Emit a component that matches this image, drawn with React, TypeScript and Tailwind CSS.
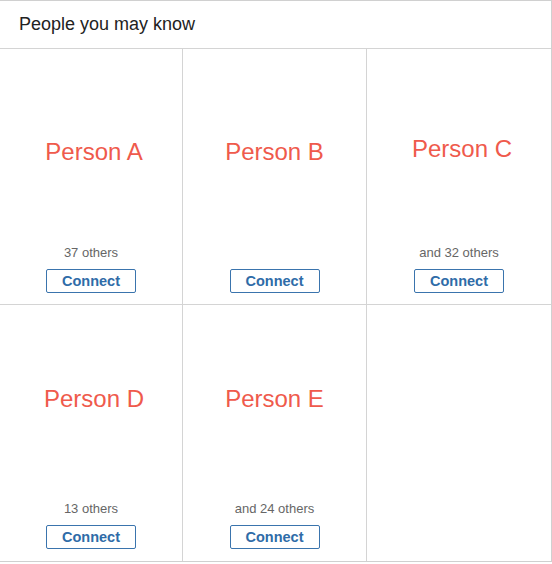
import React from 'react';

interface Person {
  name: string;
  mutual: string;
  nameTop: number;
  nameShift: number;
}

const people: Person[] = [
  { name: 'Person A', mutual: '37 others', nameTop: 89, nameShift: 3 },
  { name: 'Person B', mutual: '', nameTop: 89, nameShift: 0 },
  { name: 'Person C', mutual: 'and 32 others', nameTop: 86, nameShift: 3 },
  { name: 'Person D', mutual: '13 others', nameTop: 80, nameShift: 3 },
  { name: 'Person E', mutual: 'and 24 others', nameTop: 80, nameShift: 0 },
];

const PersonCard: React.FC<{ person: Person; last: boolean; topRow: boolean }> = ({ person, last, topRow }) => {
  return (
    <div
      className={`flex flex-col items-center h-[256px] ${last ? '' : 'border-r border-[#d4d4d4]'} ${
        topRow ? 'border-b border-[#d4d4d4] pb-[11px]' : 'pb-[12px]'
      }`}
    >
      <div
        className="text-[24px] leading-[28px] text-[#ef5a4c]"
        style={{ marginTop: person.nameTop, marginLeft: person.nameShift * 2 }}
      >
        {person.name}
      </div>
      <div className="mt-auto h-4 text-[13px] leading-4 text-[#666666]">{person.mutual}</div>
      <button className="mt-2 w-[90px] h-6 border border-[#3a74ad] rounded-[2px] text-[14.5px] font-bold text-[#2f6ca8] leading-none">
        Connect
      </button>
    </div>
  );
};

export default function App() {
  return (
    <div className="w-[552px] h-[564px] bg-white" style={{ fontFamily: '"Liberation Sans", Arial, sans-serif' }}>
      <div className="w-[552px] border-t border-r border-b border-[#d0d0d0] bg-white">
        {/* Header */}
        <div className="h-[48px] border-b border-[#d4d4d4] flex items-center pl-[19px]">
          <h2 className="text-[18px] text-[#222222]">People you may know</h2>
        </div>

        {/* Grid */}
        <div className="grid grid-cols-[183px_184px_184px]">
          {people.map((p, i) => (
            <PersonCard key={p.name} person={p} last={i % 3 === 2} topRow={i < 3} />
          ))}
          <div className="h-[256px]" />
        </div>
      </div>
    </div>
  );
}
